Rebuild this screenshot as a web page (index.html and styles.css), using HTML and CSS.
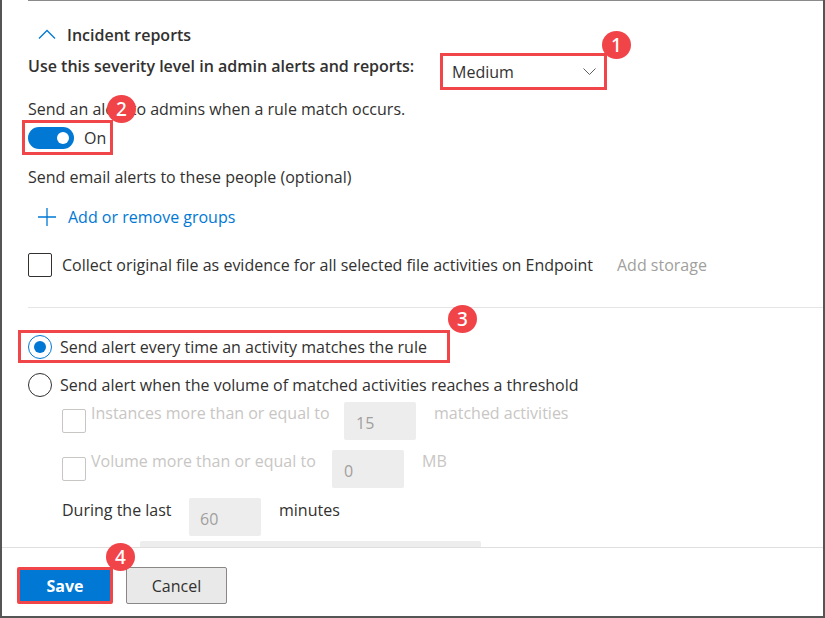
FILE: index.html
```html
<!DOCTYPE html>
<html>
<head>
<meta charset="utf-8">
<link rel="stylesheet" href="styles.css">
</head>
<body>
<div class="frame">
  <div class="content">
    <div class="head">
      <svg class="chev" width="18" height="10" viewBox="0 0 18 10"><path d="M1 9.5 L9 1.5 L17 9.5" fill="none" stroke="#0078d4" stroke-width="1.3"/></svg>
      <span>Incident reports</span>
    </div>
    <div class="sev-row">
      <div class="sev-label">Use this severity level in admin alerts and reports:</div>
      <div class="dropdown annot">
        <span>Medium</span>
        <svg class="dd-chev" width="13" height="7" viewBox="0 0 13 7"><path d="M0.5 0.5 L6.5 6.5 L12.5 0.5" fill="none" stroke="#605e5c" stroke-width="1"/></svg>
        <span class="badge b1">1</span>
      </div>
    </div>
    <div class="line alert-line">Send an alert to admins when a rule match occurs.<span class="badge b2">2</span></div>
    <div class="toggle-box annot">
      <span class="toggle"><span class="knob"></span></span>
      <span class="on">On</span>
    </div>
    <div class="line email">Send email alerts to these people (optional)</div>
    <div class="add-link">
      <svg width="18" height="18" viewBox="0 0 18 18"><path d="M9 0 V18 M0 9 H18" stroke="#0078d4" stroke-width="1.3" fill="none"/></svg>
      <span>Add or remove groups</span>
    </div>
    <div class="check-row">
      <span class="cb"></span>
      <span class="check-text">Collect original file as evidence for all selected file activities on Endpoint</span>
      <span class="add-storage">Add storage</span>
    </div>
    <div class="sep"></div>
    <div class="radio-row r1 annot">
      <span class="radio checked"><span class="dot"></span></span>
      <span>Send alert every time an activity matches the rule</span>
      <span class="badge b3">3</span>
    </div>
    <div class="radio-row r2">
      <span class="radio"></span>
      <span>Send alert when the volume of matched activities reaches a threshold</span>
    </div>
    <div class="thr-row t1">
      <span class="cb dis"></span>
      <span class="dis-text lab1">Instances more than or equal to</span>
      <span class="num">15</span>
      <span class="dis-text unit1">matched activities</span>
    </div>
    <div class="thr-row t2">
      <span class="cb dis"></span>
      <span class="dis-text lab2">Volume more than or equal to</span>
      <span class="num">0</span>
      <span class="dis-text unit2">MB</span>
    </div>
    <div class="thr-row t3">
      <span class="lab3">During the last</span>
      <span class="num">60</span>
      <span class="unit3">minutes</span>
    </div>
    <div class="cut-field"></div>
  </div>
  <div class="footer">
    <button class="btn save annot">Save<span class="badge b4">4</span></button>
    <button class="btn cancel">Cancel</button>
  </div>
</div>
</body>
</html>
```

FILE: styles.css
```css
* { box-sizing: border-box; }
html, body { margin: 0; padding: 0; background: #fff; }
body {
  font-family: "Open Sans", "Noto Sans", sans-serif;
  font-size: 16px;
  color: #323130;
}
.frame {
  position: relative;
  width: 825px;
  height: 618px;
  border-left: 2px solid #555;
  border-right: 2px solid #555;
  border-bottom: 2px solid #555;
  display: flex;
  flex-direction: column;
}
.frame::before {
  content: "";
  position: absolute;
  top: 0;
  left: 26px;
  right: 0;
  height: 1px;
  background: #8a8a8a;
}
.content {
  height: 547px;
  flex: none;
  overflow: hidden;
  padding-left: 26px;
  display: flex;
  flex-direction: column;
  align-items: flex-start;
}
.content > * { flex-shrink: 0; }
.annot { border: 3px solid #f0464a; }
.badge {
  position: absolute;
  width: 29px;
  height: 28px;
  border-radius: 50%;
  background: #f04449;
  color: #fff;
  font-family: "Noto Sans", sans-serif;
  font-size: 19px;
  line-height: 28px;
  text-align: center;
  font-weight: 500;
  z-index: 2;
}
.head {
  margin-top: 22px;
  height: 26px;
  display: flex;
  align-items: center;
  font-weight: 600;
  padding-left: 10px;
}
.chev { margin-right: 11px; margin-top: -3px; }
.sev-row {
  margin-top: 5px;
  display: flex;
  align-items: flex-start;
}
.sev-label {
  width: 412px;
  font-weight: 600;
  line-height: 20px;
  margin-top: 3px;
  white-space: nowrap;
}
.dropdown {
  position: relative;
  width: 167px;
  height: 37px;
  display: flex;
  align-items: center;
  justify-content: space-between;
  padding: 1px 8px 0 9px;
}
.dd-chev { margin-top: -2px; }
.b1 { left: 159px; top: -25px; }
.line { line-height: 20px; position: relative; white-space: nowrap; }
.alert-line { margin-top: 9px; }
.b2 { left: 79px; top: -4px; }
.toggle-box {
  margin-top: 1px;
  margin-left: -6px;
  width: 91px;
  height: 35px;
  display: flex;
  align-items: center;
  padding-left: 3px;
}
.toggle {
  width: 46px;
  height: 22px;
  border-radius: 11px;
  background: #0078d4;
  position: relative;
  display: inline-block;
}
.knob {
  position: absolute;
  right: 5px;
  top: 5px;
  width: 12px;
  height: 12px;
  border-radius: 50%;
  background: #fff;
}
.on { margin-left: 10px; }
.email { margin-top: 12px; }
.add-link {
  margin-top: 20px;
  height: 20px;
  display: flex;
  align-items: center;
  padding-left: 10px;
  color: #0078d4;
}
.add-link svg { margin-right: 12px; }
.check-row {
  margin-top: 26px;
  height: 24px;
  display: flex;
  align-items: center;
  white-space: nowrap;
}
.cb {
  width: 24px;
  height: 24px;
  border: 1px solid #323130;
  border-radius: 2px;
  flex: none;
  background: #fff;
}
.cb.dis { border-color: #c8c6c4; }
.check-text { margin-left: 10px; width: 555px; }
.add-storage { color: #a19f9d; }
.sep {
  margin-top: 30px;
  height: 1px;
  width: 795px;
  background: #e5e5e5;
}
.radio-row {
  position: relative;
  display: flex;
  align-items: center;
  white-space: nowrap;
}
.radio {
  width: 24px;
  height: 24px;
  border-radius: 50%;
  border: 1px solid #323130;
  flex: none;
  margin-right: 8px;
  display: flex;
  align-items: center;
  justify-content: center;
}
.radio.checked { border-color: #0078d4; }
.dot { width: 12px; height: 12px; border-radius: 50%; background: #0078d4; }
.r1 {
  margin-top: 22px;
  margin-left: -10px;
  width: 432px;
  height: 33px;
  padding-left: 7px;
}
.b3 { left: 427px; top: -28px; }
.r2 { margin-top: 10px; height: 24px; }
.thr-row {
  display: flex;
  align-items: flex-start;
  margin-left: 34px;
  white-space: nowrap;
  line-height: 20px;
}
.thr-row .cb { margin-top: 7px; }
.dis-text { color: #c8c6c4; }
.lab1, .lab2 { margin-left: 5px; margin-top: 1px; }
.lab1 { width: 253px; }
.lab2 { width: 241px; }
.num {
  width: 72px;
  height: 38px;
  background: #ededed;
  border-radius: 2px;
  color: #a19f9d;
  padding: 11px 0 0 12px;
  line-height: 20px;
  flex: none;
}
.unit1, .unit2 { margin-top: 1px; margin-left: 18px; }
.t1 { margin-top: 5px; }
.t2 { margin-top: 10px; }
.t3 { margin-top: 10px; }
.lab3 { width: 127px; margin-top: 2px; }
.t3 .num { padding-left: 11px; }
.unit3 { margin-left: 18px; margin-top: 2px; }
.cut-field {
  margin-top: 5px;
  margin-left: 112px;
  width: 341px;
  height: 30px;
  background: #ededed;
  border-radius: 2px;
}
.footer {
  border-top: 1px solid #e1dfdd;
  flex: 1;
  display: flex;
  align-items: flex-start;
  padding: 19px 0 0 15px;
  gap: 13px;
}
.btn {
  position: relative;
  height: 37px;
  font-family: "Open Sans", "Noto Sans", sans-serif;
  font-size: 16px;
  border-radius: 2px;
  padding: 0;
  cursor: pointer;
}
.save {
  width: 96px;
  background: #0078d4;
  color: #fff;
  font-weight: 700;
}
.cancel {
  width: 101px;
  background: #e9e9e9;
  border: 1px solid #8a8886;
  color: #323130;
}
.b4 { left: 86px; top: -27px; }
```
